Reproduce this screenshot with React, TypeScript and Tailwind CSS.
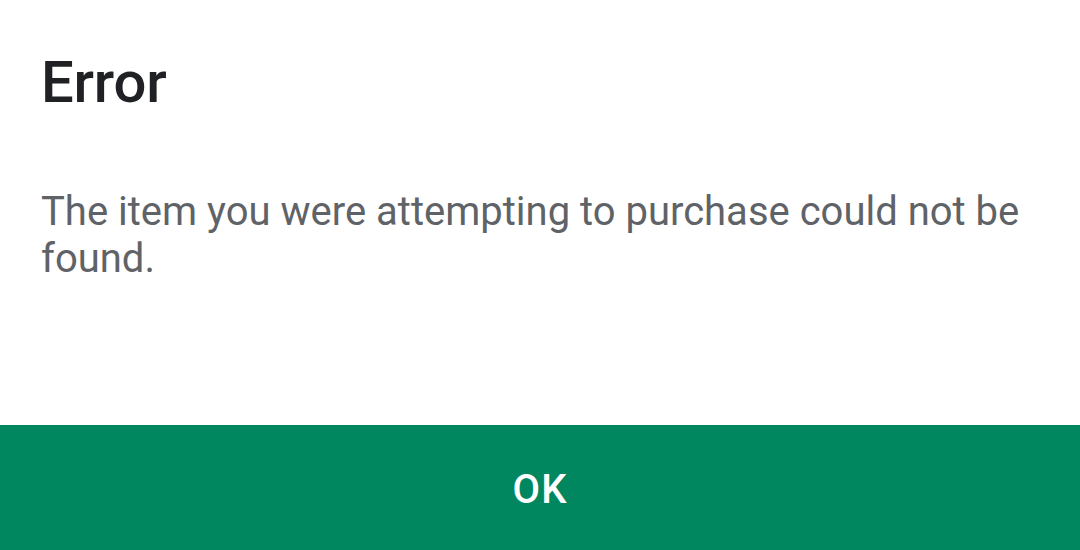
export default function App() {
  return (
    <div className="w-[1080px] h-[550px] bg-white flex flex-col overflow-hidden" style={{ fontFamily: 'Roboto, "Noto Sans", sans-serif' }}>
      <div className="flex-1 px-[41px] pt-[47px]">
        <h1 className="text-[58px] leading-[70px] font-medium text-[#202124] tracking-[-0.2px]">Error</h1>
        <p className="mt-[71px] text-[40px] leading-[47px] text-[#5f6368]">
          The item you were attempting to purchase could not be found.
        </p>
      </div>
      <button className="h-[125px] w-full bg-[#01875f] text-white text-[40px] font-medium tracking-[1px] flex items-center justify-center pt-[4px]">
        OK
      </button>
    </div>
  );
}
